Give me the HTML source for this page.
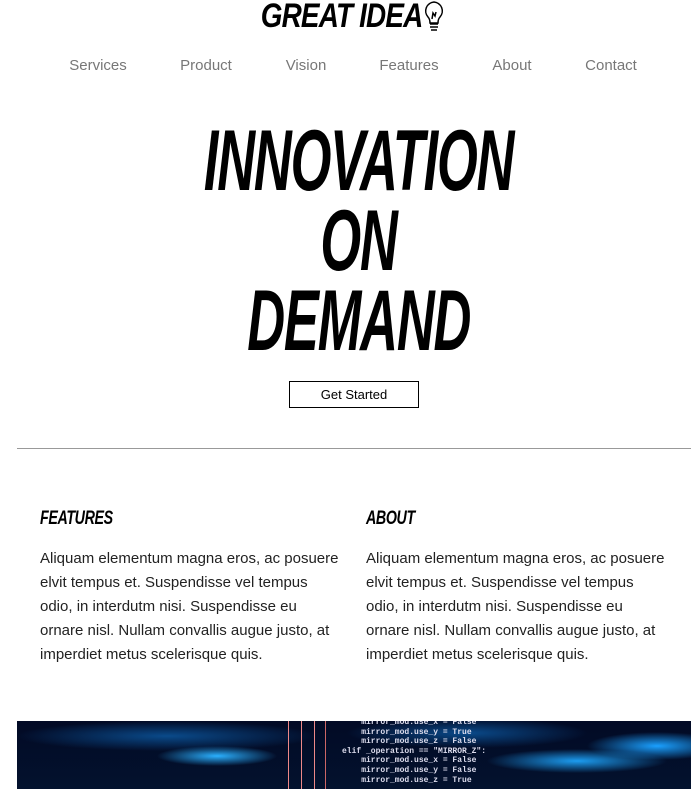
<!DOCTYPE html>
<html><head><style>
body{margin:0;width:697px;height:789px;overflow:hidden;background:#fff;font-family:"Liberation Sans",sans-serif;position:relative}
.a{position:absolute}
.logo{left:0;width:697px;top:0;text-align:center}
.logo span{display:inline-block;font:italic bold 34px "Liberation Sans",sans-serif;transform:scaleX(.82);letter-spacing:-1px;line-height:32px;margin-left:-14px}
.nav{top:57px;font-size:15px;color:#777;transform:translateX(-50%)}
.big{left:10px;width:697px;text-align:center;font:italic bold 86px/80px "Liberation Sans",sans-serif;top:121px}
.big div{display:inline-block;transform:scaleX(.61);white-space:nowrap;letter-spacing:-2px}
.btn{left:289px;top:381px;width:128px;height:25px;border:1px solid #000;font-size:13px;text-align:center;line-height:25px}
hr{position:absolute;left:17px;top:448px;width:674px;margin:0;border:0;border-top:1px solid #999}
h3{position:absolute;margin:0;font:italic bold 19px "Liberation Sans",sans-serif;transform:scaleX(.75);transform-origin:left;top:508px;letter-spacing:-.5px}
.p{top:547px;width:300px;font-size:15px;line-height:24px;color:#222}
.img{left:17px;top:721px;width:674px;height:68px;background:
radial-gradient(ellipse 60px 10px at 200px 35px,#2ab0ff,transparent),
radial-gradient(ellipse 90px 12px at 560px 40px,#1c9cf0,transparent),
radial-gradient(ellipse 70px 14px at 640px 25px,#1aa0ff,transparent),
radial-gradient(ellipse 150px 15px at 150px 15px,#0a4a8a,transparent),
radial-gradient(ellipse 120px 15px at 450px 12px,#0a4a8a,transparent),
linear-gradient(#020a25,#03122e);overflow:hidden}
.code{left:325px;top:-3px;font:bold 8px/9.6px "Liberation Mono",monospace;color:#dde;white-space:pre}
.ln{top:0;width:1px;height:68px;background:#e88}
</style></head><body>
<div class="a logo"><span>GREAT IDEA</span><svg style="position:absolute;left:421px;top:0" width="26" height="32" viewBox="0 0 26 32"><path d="M13 2a9 9 0 0 0-6 15c2 2 2 4 2 6h8c0-2 0-4 2-6a9 9 0 0 0-6-15z" fill="none" stroke="#000" stroke-width="1.5"/><path d="M9 24h8M9 27h8M10 30h6M11 19l1-6 2 3 1-4" fill="none" stroke="#000" stroke-width="1.5"/></svg></div>
<div class="a nav" style="left:98px">Services</div>
<div class="a nav" style="left:206px">Product</div>
<div class="a nav" style="left:306px">Vision</div>
<div class="a nav" style="left:409px">Features</div>
<div class="a nav" style="left:512px">About</div>
<div class="a nav" style="left:611px">Contact</div>
<div class="a big"><div>INNOVATION</div><br><div>ON</div><br><div>DEMAND</div></div>
<div class="a btn">Get Started</div>
<hr>
<h3 style="left:40px">FEATURES</h3>
<h3 style="left:366px">ABOUT</h3>
<div class="a p" style="left:40px">Aliquam elementum magna eros, ac posuere elvit tempus et. Suspendisse vel tempus odio, in interdutm nisi. Suspendisse eu ornare nisl. Nullam convallis augue justo, at imperdiet metus scelerisque quis.</div>
<div class="a p" style="left:366px">Aliquam elementum magna eros, ac posuere elvit tempus et. Suspendisse vel tempus odio, in interdutm nisi. Suspendisse eu ornare nisl. Nullam convallis augue justo, at imperdiet metus scelerisque quis.</div>
<div class="a img">
<div class="a ln" style="left:271px"></div><div class="a ln" style="left:284px"></div><div class="a ln" style="left:297px"></div><div class="a ln" style="left:308px;background:#c66"></div>
<div class="a code">    mirror_mod.use_x = False
    mirror_mod.use_y = True
    mirror_mod.use_z = False
elif _operation == "MIRROR_Z":
    mirror_mod.use_x = False
    mirror_mod.use_y = False
    mirror_mod.use_z = True</div>
</div>
</body></html>
